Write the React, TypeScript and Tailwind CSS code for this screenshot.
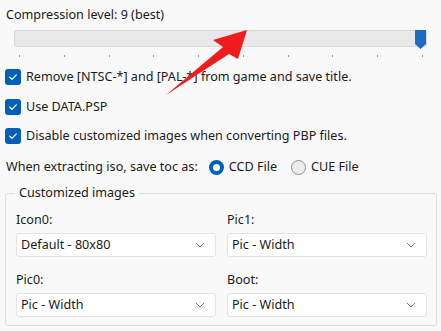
import React from 'react';

const font = { fontFamily: '"Noto Sans", "Segoe UI", sans-serif' };

function Check({ label, className = '' }: { label: string; className?: string }) {
  return (
    <div className={`flex items-center h-[16px] ${className}`}>
      <span className="w-[16px] h-[16px] rounded-[3px] bg-[#005fb8] flex items-center justify-center shrink-0">
        <svg width="10" height="10" viewBox="0 0 10 10" fill="none">
          <path d="M1.8 5.2 L4 7.3 L8.3 2.8" stroke="white" strokeWidth="1.2" strokeLinecap="round" strokeLinejoin="round" />
        </svg>
      </span>
      <span className="ml-[5px] text-[12.6px] text-[#1a1a1a] whitespace-nowrap">{label}</span>
    </div>
  );
}

function Select({ value }: { value: string }) {
  return (
    <div className="w-[200px] h-[24px] bg-white border border-[#e3e3e3] rounded-[3px] flex items-center justify-between pl-[4px] pr-[10px]">
      <span className="text-[12.6px] text-[#1a1a1a]">{value}</span>
      <svg width="10" height="6" viewBox="0 0 10 6" fill="none">
        <path d="M1 1 L5 5 L9 1" stroke="#7a7a7a" strokeWidth="1" />
      </svg>
    </div>
  );
}

function Field({ label, value }: { label: string; value: string }) {
  return (
    <div className="flex flex-col">
      <span className="h-[16px] leading-[16px] text-[12.6px] text-[#1a1a1a]">{label}</span>
      <div className="mt-[5px]">
        <Select value={value} />
      </div>
    </div>
  );
}

export default function App() {
  const ticks = Array.from({ length: 10 });
  return (
    <div className="relative w-[441px] h-[331px] bg-[#f9f9f9] overflow-hidden" style={font}>
      <div className="pt-[7px] pl-[6px] h-[30px] text-[12.6px] leading-[16px] text-[#1a1a1a]">Compression level: 9 (best)</div>

      <div className="relative ml-[14px] w-[413px] h-[17px] bg-[#e8e8e8] border border-[#d9d9d9] rounded-[2px]">
        <div className="absolute right-[0px] top-[-1px]">
          <svg width="11" height="19" viewBox="0 0 11 19">
            <path d="M0 0 H11 V14 L5.5 19 L0 14 Z" fill="#1c6bc4" />
          </svg>
        </div>
      </div>
      <div className="mt-[8px] ml-[19px] w-[404px] flex justify-between">
        {ticks.map((_, i) => (
          <span key={i} className="w-[1px] h-[2px] bg-[#9a9a9a]" />
        ))}
      </div>

      <div className="pl-[5px]">
        <Check className="mt-[12px]" label="Remove [NTSC-*] and [PAL-*] from game and save title." />
        <Check className="mt-[14px]" label="Use DATA.PSP" />
        <Check className="mt-[13px]" label="Disable customized images when converting PBP files." />
      </div>

      <div className="mt-[15px] pl-[6px] flex items-center h-[16px] text-[12.6px] text-[#1a1a1a]">
        <span>When extracting iso, save toc as:</span>
        <span className="ml-[11px] w-[15px] h-[15px] rounded-full bg-[#005fb8] flex items-center justify-center">
          <span className="w-[7px] h-[7px] rounded-full bg-white" />
        </span>
        <span className="ml-[5px]">CCD File</span>
        <span className="ml-[14px] w-[15px] h-[15px] rounded-full bg-[#ececec] border border-[#8f8f8f]" />
        <span className="ml-[5px]">CUE File</span>
      </div>

      <div className="relative mt-[18px] ml-[5px] w-[432px] h-[133px] border border-[#dcdcdc] rounded-[3px] pt-[18px] pl-[10px]">
        <span className="absolute top-[-9px] left-[9px] px-[4px] bg-[#f9f9f9] text-[12.6px] leading-[16px] text-[#1a1a1a]">Customized images</span>
        <div className="flex gap-[11px]">
          <Field label="Icon0:" value="Default - 80x80" />
          <Field label="Pic1:" value="Pic - Width" />
        </div>
        <div className="flex gap-[11px] mt-[15px]">
          <Field label="Pic0:" value="Pic - Width" />
          <Field label="Boot:" value="Pic - Width" />
        </div>
      </div>

      <svg className="absolute left-0 top-0 pointer-events-none" width="441" height="331" viewBox="0 0 441 331">
        <path d="M247 30 L213 40 L223 47 L166 95 L229 54 L238 59 Z" fill="#ee1c1c" />
      </svg>
    </div>
  );
}
